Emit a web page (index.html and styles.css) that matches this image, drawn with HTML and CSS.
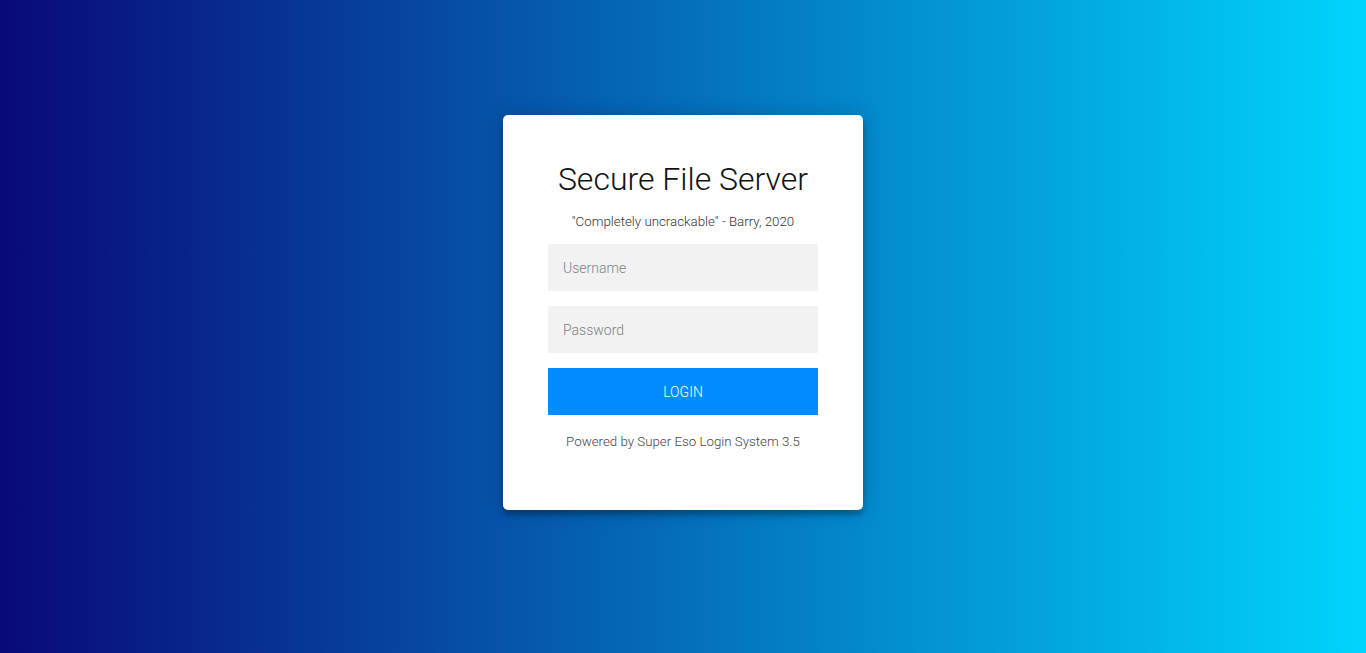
FILE: index.html
```html
<!DOCTYPE html>
<html>
<head>
<meta charset="utf-8">
<link rel="stylesheet" href="styles.css">
</head>
<body>
<div class="page">
  <form class="card">
    <h1 class="title">Secure File Server</h1>
    <p class="quote">"Completely uncrackable" - Barry, 2020</p>
    <input class="field" type="text" placeholder="Username">
    <input class="field" type="password" placeholder="Password">
    <button class="btn" type="button">Login</button>
    <p class="footer">Powered by Super Eso Login System 3.5</p>
  </form>
</div>
</body>
</html>
```
FILE: styles.css
```css
html, body {
  margin: 0;
  height: 100%;
}
body {
  background: linear-gradient(90deg, #090979 0%, #00d4ff 100%);
  font-family: Roboto, "Liberation Sans", sans-serif;
}
.page {
  display: flex;
  justify-content: center;
  padding-top: 115px;
}
.card {
  box-sizing: border-box;
  width: 360px;
  height: 395px;
  background: #fff;
  border-radius: 5px;
  padding: 47px 45px 45px;
  display: flex;
  flex-direction: column;
  align-items: stretch;
  text-align: center;
  box-shadow: 0 0 20px 0 rgba(0,0,0,0.2), 0 5px 5px 0 rgba(0,0,0,0.24);
}
.title {
  margin: 0;
  font-size: 32px;
  font-weight: 300;
  line-height: 35px;
  color: #111;
}
.quote {
  margin: 17px 0 14px;
  font-size: 13.3px;
  line-height: 16px;
  color: #333;
  font-weight: 300;
}
.field {
  box-sizing: border-box;
  width: 100%;
  height: 47px;
  border: 0;
  margin: 0 0 15px;
  padding: 15px;
  background: #f2f2f2;
  font-family: Roboto, "Liberation Sans", sans-serif;
  font-size: 14px;
  font-weight: 300;
  outline: none;
}
.field::placeholder {
  color: #808080;
}
.btn {
  height: 47px;
  border: 0;
  padding: 15px;
  background: #008cff;
  color: #fff;
  font-family: Roboto, "Liberation Sans", sans-serif;
  font-size: 14px;
  font-weight: 300;
  text-transform: uppercase;
}
.footer {
  margin: 19px 0 0;
  font-size: 13.3px;
  line-height: 16px;
  color: #444;
  font-weight: 300;
}
```
